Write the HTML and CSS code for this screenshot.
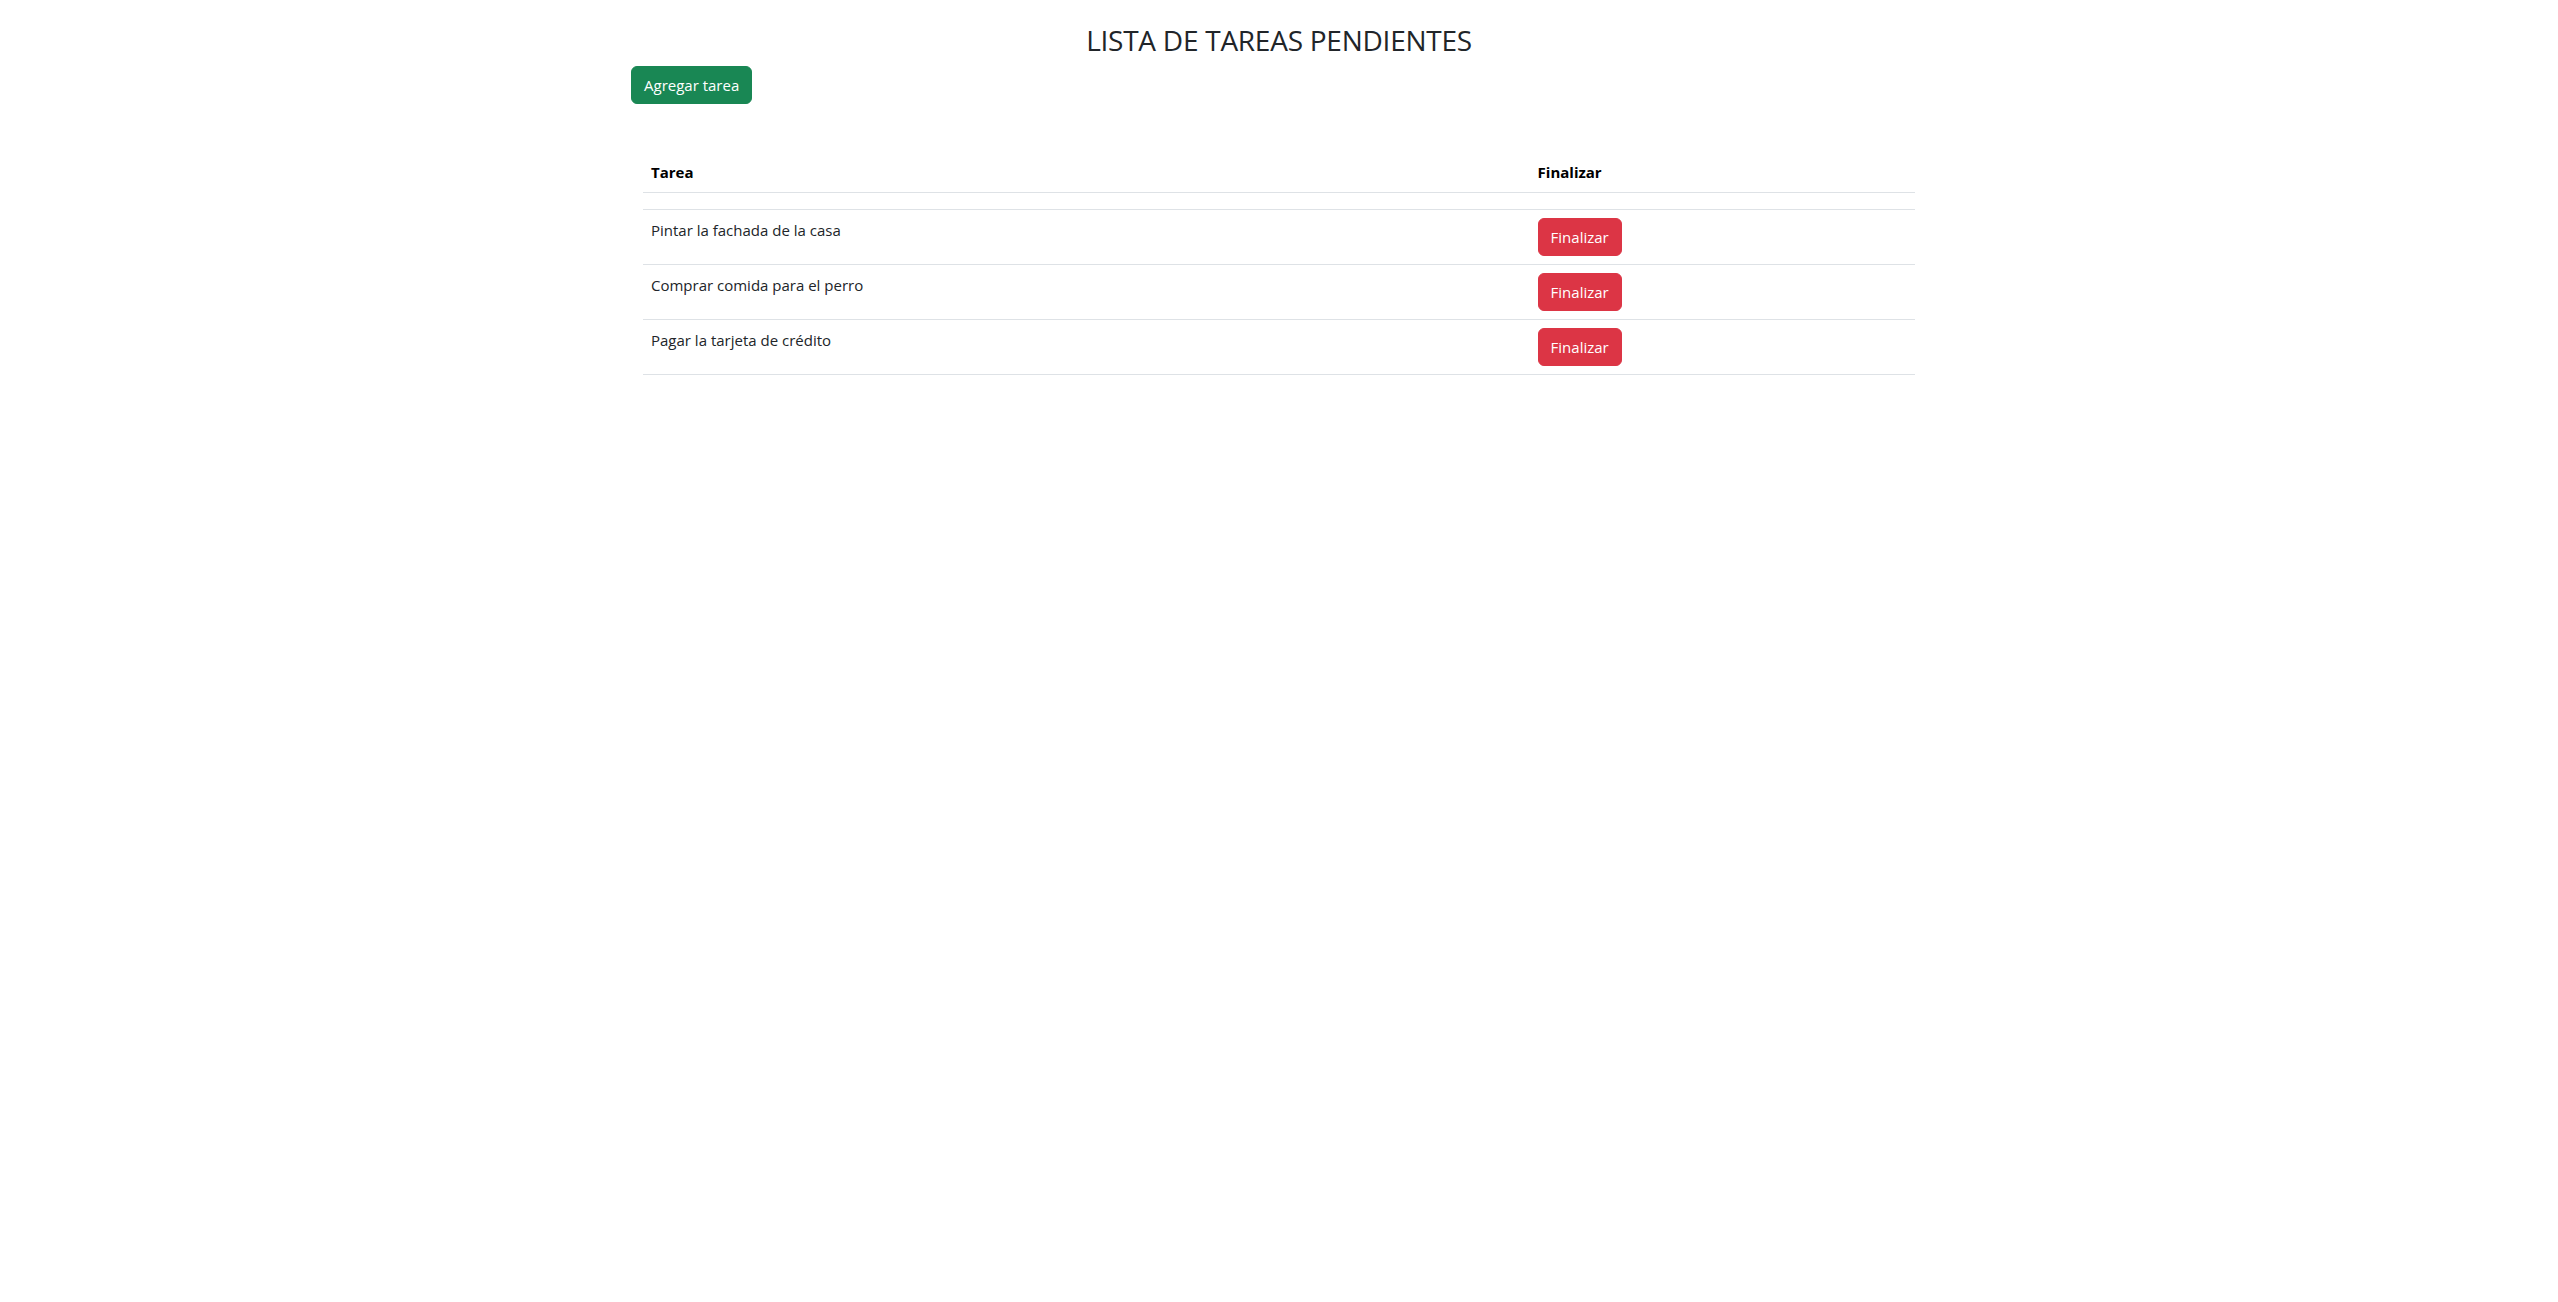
FILE: index.html
```html
<!DOCTYPE html>
<html lang="es">
<head>
<meta charset="utf-8">
<title>Lista de tareas</title>
<link rel="stylesheet" href="styles.css">
</head>
<body>
<div class="container">
  <h3 class="title">LISTA DE TAREAS PENDIENTES</h3>
  <div class="actions">
    <button class="btn btn-success" type="button">Agregar tarea</button>
  </div>
  <div class="table-wrap">
    <table class="table">
      <thead>
        <tr>
          <th class="col-task">Tarea</th>
          <th class="col-action">Finalizar</th>
        </tr>
      </thead>
      <tbody>
        <tr class="empty-row"><td></td><td></td></tr>
        <tr>
          <td>Pintar la fachada de la casa</td>
          <td><button class="btn btn-danger" type="button">Finalizar</button></td>
        </tr>
        <tr>
          <td>Comprar comida para el perro</td>
          <td><button class="btn btn-danger" type="button">Finalizar</button></td>
        </tr>
        <tr>
          <td>Pagar la tarjeta de crédito</td>
          <td><button class="btn btn-danger" type="button">Finalizar</button></td>
        </tr>
      </tbody>
    </table>
  </div>
</div>
</body>
</html>
```
FILE: styles.css
```css
* { box-sizing: border-box; }

body {
  margin: 0;
  font-family: "Open Sans", "Noto Sans", sans-serif;
  font-size: 15px;
  line-height: 24px;
  color: #212529;
  background: #fff;
}

.container {
  max-width: 1320px;
  margin: 0 auto;
  padding: 0 12px;
}

.title {
  margin: 24px 0 8px;
  text-align: center;
  font-size: 28px;
  font-weight: 500;
  line-height: 1.2;
  letter-spacing: -0.25px;
  color: #212529;
}

.actions {
  display: flex;
}

.btn {
  display: inline-block;
  font-family: inherit;
  font-size: 15px;
  line-height: 24px;
  padding: 6px 12px;
  border: 1px solid transparent;
  border-radius: 6px;
  color: #fff;
  cursor: pointer;
}

.btn-success {
  background: #198754;
  border-color: #198754;
}

.btn-danger {
  background: #dc3545;
  border-color: #dc3545;
}

.table-wrap {
  margin-top: 48px;
  padding: 0 12px;
}

.table {
  width: 100%;
  border-collapse: collapse;
  margin-bottom: 16px;
  vertical-align: top;
  color: #212529;
}

.table th,
.table td {
  padding: 8px;
  border-bottom: 1px solid #dee2e6;
  text-align: left;
  vertical-align: top;
}

.table th {
  font-weight: 700;
  color: #000;
}

.col-task { width: 69.7%; }

.empty-row td { height: 16px; }
```
